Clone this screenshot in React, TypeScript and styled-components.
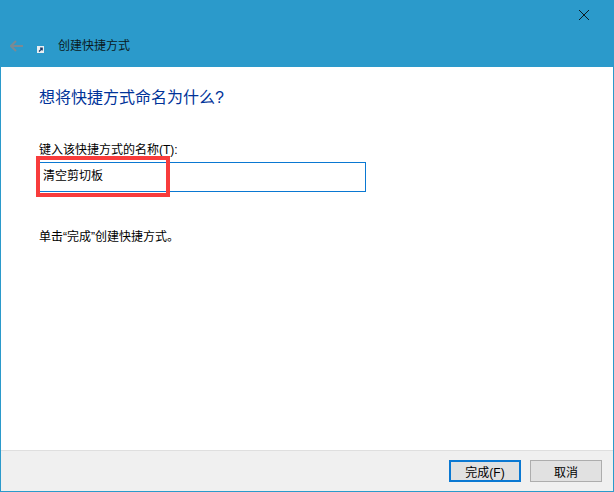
import { FC } from 'react';
import styled, { createGlobalStyle } from 'styled-components';

const GlobalStyle = createGlobalStyle`
  html, body {
    margin: 0;
    padding: 0;
    background: #fff;
  }
`;

const Window = styled.div`
  box-sizing: border-box;
  width: 614px;
  height: 492px;
  display: flex;
  flex-direction: column;
  border: 1px solid #2b9acb;
  border-top: 0;
  background: #fff;
  font-family: 'Liberation Sans', 'Noto Sans CJK SC', sans-serif;
  font-size: 12px;
  color: #000;
`;

const Header = styled.div`
  height: 67px;
  flex: none;
  background: #2b9acb;
  display: flex;
  flex-direction: column;
`;

const CaptionBar = styled.div`
  height: 30px;
  display: flex;
  justify-content: flex-end;
  align-items: center;
  padding-right: 24px;
`;

const NavRow = styled.div`
  display: flex;
  align-items: center;
  height: 32px;
  padding-left: 9px;
`;

const AppIcon = styled.svg`
  margin: 7px 14px 0 13px;
  flex: none;
`;

const Title = styled.span`
  font-size: 12px;
  line-height: 33px;
  color: #0a1a22;
`;

const Main = styled.div`
  flex: 1;
  display: flex;
  flex-direction: column;
  padding: 19px 0 0 38px;
`;

const Heading = styled.h1`
  margin: 0;
  font-size: 16px;
  line-height: 24px;
  font-weight: 400;
  color: #003399;
`;

const Label = styled.label`
  margin-top: 31px;
  line-height: 18px;
`;

const Field = styled.div`
  position: relative;
  width: 327px;
  margin-top: 3px;
`;

const NameInput = styled.input`
  box-sizing: border-box;
  display: block;
  width: 100%;
  height: 30px;
  padding: 0 3px 6px;
  border: 1px solid #0a78d2;
  outline: none;
  font: inherit;
  font-size: 12px;
  color: #000;
`;

const Highlight = styled.div`
  position: absolute;
  left: -3px;
  top: -6px;
  width: 134px;
  height: 41px;
  box-sizing: border-box;
  border: 4px solid #f83c3c;
  pointer-events: none;
`;

const Hint = styled.p`
  margin: 36px 0 0;
  line-height: 18px;
`;

const Footer = styled.div`
  height: 41px;
  flex: none;
  display: flex;
  justify-content: flex-end;
  gap: 9px;
  padding: 9px 11px 0 0;
  box-sizing: border-box;
  background: #f0f0f0;
  border-top: 1px solid #dfdfdf;
`;

const Button = styled.button<{ $primary?: boolean }>`
  box-sizing: border-box;
  width: 72px;
  height: 22px;
  padding: 0;
  background: #e1e1e1;
  border: ${(p) => (p.$primary ? '2px solid #0a78d2' : '1px solid #adadad')};
  font: inherit;
  font-size: 12px;
  color: #000;
`;

const App: FC = () => {
  return (
    <>
      <GlobalStyle />
      <Window>
        <Header>
          <CaptionBar>
            <svg width="10" height="10" viewBox="0 0 10 10">
              <path d="M0 0L10 10M10 0L0 10" stroke="#0a1a22" strokeWidth="1" fill="none" />
            </svg>
          </CaptionBar>
          <NavRow>
            <svg width="14" height="12" viewBox="0 0 14 12">
              <path d="M6 1L1 6L6 11M1 6H13" stroke="#7a8a94" strokeWidth="2" fill="none" />
            </svg>
            <AppIcon width="7" height="7" viewBox="0 0 7 7">
              <rect width="7" height="7" fill="#e8eef2" />
              <path d="M2 5.5L5 2.5M3 2.2H5.2V4.4" stroke="#1d3d6b" strokeWidth="1.2" fill="none" />
            </AppIcon>
            <Title>创建快捷方式</Title>
          </NavRow>
        </Header>
        <Main>
          <Heading>想将快捷方式命名为什么?</Heading>
          <Label htmlFor="shortcut-name">键入该快捷方式的名称(T):</Label>
          <Field>
            <NameInput id="shortcut-name" defaultValue="清空剪切板" />
            <Highlight />
          </Field>
          <Hint>单击“完成”创建快捷方式。</Hint>
        </Main>
        <Footer>
          <Button $primary>完成(F)</Button>
          <Button>取消</Button>
        </Footer>
      </Window>
    </>
  );
};

export default App;
